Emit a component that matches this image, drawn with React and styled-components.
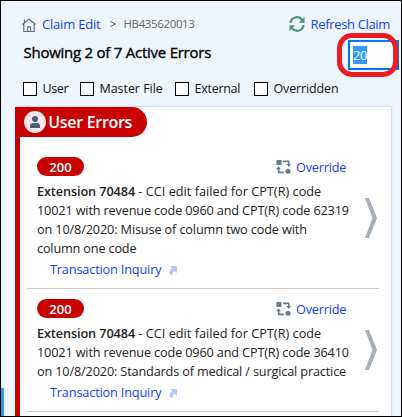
import React from "react";
import styled, { createGlobalStyle } from "styled-components";

const Global = createGlobalStyle`
  * { box-sizing: border-box; }
  body { margin: 0; overflow: hidden; font-family: "Open Sans", "Noto Sans", sans-serif; }
`;

const Frame = styled.main`
  position: relative;
  width: 402px;
  height: 417px;
  overflow: hidden;
  border: 1px solid #000;
  background: #edf5ff;
  color: #222;
`;
const Text = styled.span`
  font-size: ${(p) => p.$size || 12.7}px;
  font-weight: ${(p) => p.$weight || 400};
  letter-spacing: ${(p) => p.$track ?? -0.17}px;
  color: ${(p) => p.$color || "inherit"};
  white-space: pre;
`;
const Link = styled(Text).attrs({ as: "a" })`
  color: #1440ff;
`;
const TopBar = styled.header`
  display: flex;
  align-items: center;
  height: 18px;
  margin: 14px 11px 0 21px;
`;
const Crumbs = styled.nav`
  display: flex;
  align-items: center;
  flex: 1;
  gap: 6px;
`;
const Separator = styled.svg`
  width: 6px;
  height: 6px;
  margin: 0 1px 0 4px;
`;
const ClaimId = styled(Text)`
  padding-bottom: 2px;
`;
const HomeSvg = styled.svg`
  margin-top: 2px;
`;
const Refresh = styled.div`
  display: flex;
  align-items: center;
  gap: 6px;
`;
const Summary = styled.section`
  display: flex;
  justify-content: space-between;
  height: 30px;
  margin: 7px 2px 0 22.5px;
`;
const Title = styled.h1`
  margin: 0;
  line-height: 24px;
  font-size: 15px;
  font-weight: 400;
  letter-spacing: -0.25px;
  color: #000;
  -webkit-text-stroke: 0.35px #000;
`;
const SearchBox = styled.div`
  width: 51px;
  padding: 4px 3px;
  border: 2px solid #0078f5;
  background: #fff;
`;
const Selected = styled.span`
  display: block;
  width: 14px;
  height: 18px;
  line-height: 18px;
  background: #3399ff;
  color: #fff;
  font-size: 12.7px;
  letter-spacing: -0.3px;
`;
const Highlight = styled.div`
  position: absolute;
  left: 336px;
  top: 32px;
  width: 61px;
  height: 44px;
  border: 5px solid #ed1c24;
  border-radius: 15px;
`;
const Filters = styled.section`
  display: grid;
  grid-template-columns: 57px 95px 79px 90px;
  height: 14px;
  margin: 10px 0 0 22px;
`;
const Filter = styled.label`
  display: flex;
  align-items: center;
  gap: 5.5px;
  color: #111;
`;
const Check = styled.span`
  width: 14px;
  height: 14px;
  border: 1px solid #000;
  background: #fff;
`;
const Card = styled.section`
  width: 376px;
  height: 330px;
  margin: 13px 0 0 14px;
  border-left: 5px solid #c80000;
  background: #fff;
  box-shadow: 1px -1px 1px #d3dde7;
`;
const CardHeader = styled.h2`
  display: flex;
  align-items: center;
  gap: 2.2px;
  width: 132px;
  height: 30px;
  margin: 0 0 0 -5px;
  padding-left: 9px;
  border-radius: 0 15px 15px 0;
  background: #c80000;
  color: #fff;
`;
const List = styled.div`
  padding: 11px 12px 0 7px;
`;
const Item = styled.article`
  display: flex;
  align-items: center;
  height: ${(p) => p.$height}px;
  padding: 0 2px 0 10px;
  border-bottom: 1px solid #ccc;
`;
const Details = styled.div`
  flex: 1;
  align-self: flex-start;
  padding-top: ${(p) => p.$top}px;
`;
const ItemHead = styled.div`
  display: flex;
  justify-content: space-between;
  align-items: center;
  height: 19px;
  margin-bottom: 5px;
`;
const Badge = styled.span`
  display: flex;
  align-items: center;
  justify-content: center;
  width: 47px;
  height: 19px;
  border-radius: 10px;
  background: #c80000;
  color: #fff;
`;
const Override = styled.div`
  display: flex;
  align-items: center;
  gap: 5px;
  width: 89px;
  margin-right: -1px;
`;
const Line = styled.div`
  width: 320px;
  height: 19px;
  line-height: 19px;
`;
const Inquiry = styled.div`
  display: flex;
  align-items: center;
  gap: 8px;
  height: 18px;
  margin: 3px 0 0 13px;
`;
const JumpSvg = styled.svg`
  margin-top: 2px;
`;

const HomeIcon = () => (
  <HomeSvg width="14" height="14" viewBox="0 0 14 14" fill="none" stroke="#5b6f81" strokeWidth="1.2">
    <path d="M.5 6.500 7 1l6.500 5.500M1.800 5.500v8h10.400v-8M2.400 5V1.500M5.500 13V8.800h3V13" />
  </HomeSvg>
);
const RefreshIcon = () => (
  <svg width="16" height="16" viewBox="0 0 16 16" fill="none" stroke="#4f9473" strokeWidth="2.200">
    <path d="M1.500 7C2 1 9.500-.8 13.500 4M14.500 9c-.5 6-8 7.800-12 3" />
    <path d="M15.500 .8v6H9.800zM.5 15.200v-6h5.700z" fill="#4f9473" stroke="none" />
  </svg>
);
const UserIcon = () => (
  <svg width="22" height="22" viewBox="0 0 22 22">
    <circle cx="11" cy="11" r="11" fill="#f8e6ea" />
    <circle cx="11" cy="8" r="3" fill="#4d6073" />
    <path d="M6 17v-2q0-3 3-3h4q3 0 3 3v2z" fill="#4d6073" />
  </svg>
);
const OverrideIcon = () => (
  <svg width="15" height="14" viewBox="0 0 15 14" fill="#667b8d">
    <path d="M.5 0h5v5h-5zM7 .5h6.500V4H15l-2.300 3-2.300-3H12V2.200H7zM2.500 6.200 5 9.200H3.500v2.300H8v1.700H1.800v-4H0z" />
    <circle cx="12" cy="11.300" r="2.500" />
  </svg>
);
const JumpIcon = () => (
  <JumpSvg width="8" height="9" viewBox="0 0 8 9">
    <path d="M1 0h7v7L5.900 5Q2.800 5.500 4 9 0 8.600.2 6 .5 3.300 3.200 2.300z" fill="#b3c5ff" />
  </JumpSvg>
);
const Chevron = () => (
  <svg width="13" height="40" viewBox="0 0 13 40">
    <path d="M1 0h4L13 20 5 40H1L8.500 20z" fill="#a3b0bb" />
  </svg>
);

const FILTERS = [["User", -0.35], ["Master File", -0.05], ["External", -0.27], ["Overridden", -0.13]];
const ERRORS = [
  {
    height: 141,
    top: 9,
    lines: [
      ["10021 with revenue code 0960 and CPT(R) code 62319", -0.15],
      ["on 10/8/2020: Misuse of column two code with", -0.13],
      ["column one code", -0.17],
    ],
  },
  {
    height: 123,
    top: 10,
    lines: [
      ["10021 with revenue code 0960 and CPT(R) code 36410", -0.15],
      ["on 10/8/2020: Standards of medical / surgical practice", -0.15],
    ],
  },
];

const StatusStrip = styled.div`
  position: absolute;
  left: 0;
  bottom: 0;
  width: 3px;
  height: 28px;
  background: #2d9ce5;
`;

export default function App() {
  return (
    <Frame>
      <Global />
      <TopBar>
        <Crumbs>
          <HomeIcon />
          <Link $size={13} $track={-0.2}>Claim Edit</Link>
          <Separator viewBox="0 0 6 6" fill="none" stroke="#666"><path d="m.5.5 5 2.500-5 2.500" /></Separator>
          <ClaimId $size={11.5} $track={-0.37} $color="#666">HB435620013</ClaimId>
        </Crumbs>
        <Refresh>
          <RefreshIcon />
          <Link $size={13} $track={-0.34}>Refresh Claim</Link>
        </Refresh>
      </TopBar>
      <Summary>
        <Title>Showing 2 of 7 Active Errors</Title>
        <SearchBox><Selected>20</Selected></SearchBox>
      </Summary>
      <Filters>
        {FILTERS.map(([name, track]) => (
          <Filter key={name}>
            <Check />
            <Text $size={12.5} $track={track}>{name}</Text>
          </Filter>
        ))}
      </Filters>
      <Card>
        <CardHeader>
          <UserIcon />
          <Text $size={16} $weight={600} $track={-0.3}>User Errors</Text>
        </CardHeader>
        <List>
          {ERRORS.map((error) => (
            <Item key={error.height} $height={error.height}>
              <Details $top={error.top}>
                <ItemHead>
                  <Badge><Text $size={13} $weight={600} $track={0}>200</Text></Badge>
                  <Override>
                    <OverrideIcon />
                    <Link $track={-0.2}>Override</Link>
                  </Override>
                </ItemHead>
                <Line>
                  <Text $size={12.7} $weight={600} $track={-0.1}>Extension 70484</Text>
                  <Text $track={0.02}> - CCI edit failed for CPT(R) code</Text>
                </Line>
                {error.lines.map(([line, track]) => (
                  <Line key={line}><Text $track={track}>{line}</Text></Line>
                ))}
                <Inquiry>
                  <Link $track={-0.15}>Transaction Inquiry</Link>
                  <JumpIcon />
                </Inquiry>
              </Details>
              <Chevron />
            </Item>
          ))}
        </List>
      </Card>
      <Highlight />
      <StatusStrip />
    </Frame>
  );
}
